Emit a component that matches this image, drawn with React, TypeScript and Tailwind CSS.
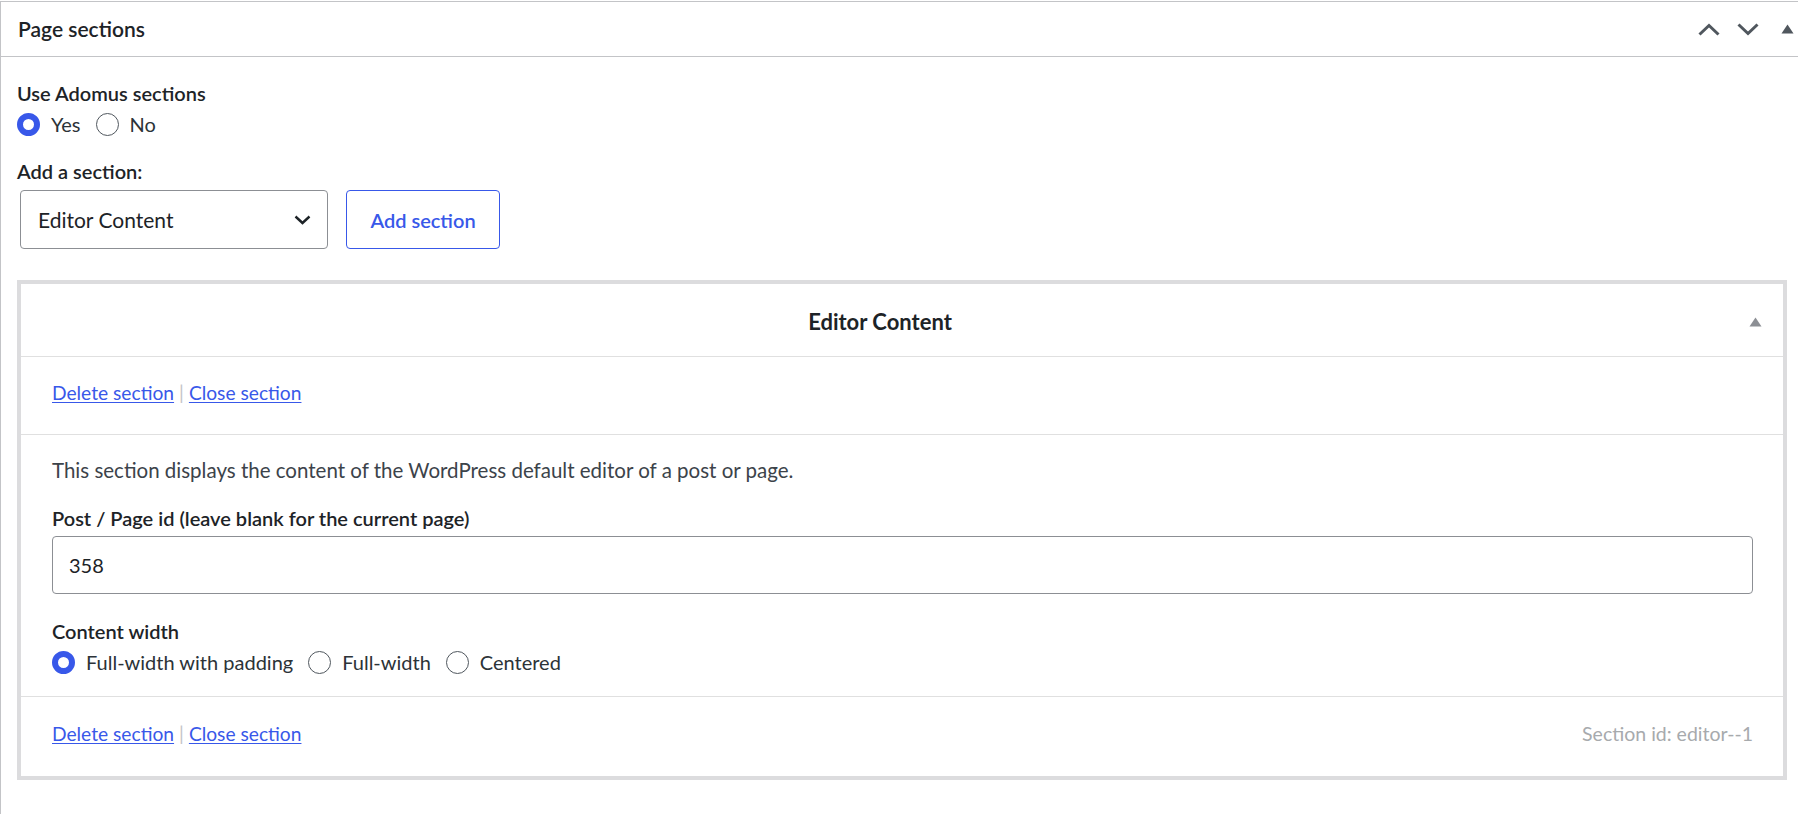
import React from "react";

const font = { fontFamily: "Lato, 'Noto Sans', sans-serif" };

function Radio({ checked, label }: { checked?: boolean; label: string }) {
  return (
    <label className="flex items-center gap-[11px] mr-[15px]">
      {checked ? (
        <span className="w-[23px] h-[23px] rounded-full border-[6px] border-[#3858e9] bg-white" />
      ) : (
        <span className="w-[23px] h-[23px] rounded-full border-[1.5px] border-[#50575e] bg-white" />
      )}
      <span>{label}</span>
    </label>
  );
}

function SectionLinks() {
  return (
    <div className="flex items-center text-[19.2px] leading-[28px]">
      <a href="#" className="text-[#3858e9] underline underline-offset-2">Delete section</a>
      <span className="mx-[5px] text-[#c3c4c7]">|</span>
      <a href="#" className="text-[#3858e9] underline underline-offset-2">Close section</a>
    </div>
  );
}

export default function App() {
  return (
    <div className="w-[1798px] h-[814px] bg-white overflow-hidden pt-px text-[#1d2327]" style={font}>
      <div className="h-full border-l border-t border-[#c3c4c7]">
        {/* Header */}
        <div className="h-[55px] flex items-center border-b border-[#c3c4c7] pl-[17px]">
          <h2 className="text-[21px] font-semibold">Page sections</h2>
          <div className="ml-auto flex items-center">
            <svg width="22" height="13" viewBox="0 0 22 13" className="mt-[1px]">
              <path d="M1.5 11.5 L11 2.5 L20.5 11.5" fill="none" stroke="#50575e" strokeWidth="3" />
            </svg>
            <svg width="22" height="13" viewBox="0 0 22 13" className="ml-[17px] mt-[1px]">
              <path d="M1.5 1.5 L11 10.5 L20.5 1.5" fill="none" stroke="#50575e" strokeWidth="3" />
            </svg>
            <svg width="13" height="10" viewBox="0 0 13 10" className="ml-[22px] mr-[4px]">
              <path d="M6.5 0.5 L12.5 9.5 L0.5 9.5 Z" fill="#50575e" />
            </svg>
          </div>
        </div>

        {/* Body */}
        <div className="pl-4">
          <div className="pt-[22px] text-[20px] leading-[28px] font-semibold">Use Adomus sections</div>
          <div className="mt-[2px] h-[30px] flex items-center text-[20px] text-[#2c3338]">
            <Radio checked label="Yes" />
            <Radio label="No" />
          </div>
          <div className="mt-[18px] text-[20px] leading-[28px] font-semibold">Add a section:</div>
          <div className="mt-[5px] flex items-center">
            <div className="ml-[3px] w-[308px] h-[59px] border border-[#8c8f94] rounded-[4px] flex items-center pl-[17px] pr-[16px] text-[21px]">
              <span>Editor Content</span>
              <svg width="17" height="10" viewBox="0 0 17 10" className="ml-auto">
                <path d="M1.5 1.5 L8.5 8 L15.5 1.5" fill="none" stroke="#1d2327" strokeWidth="2.4" />
              </svg>
            </div>
            <button className="ml-[18px] w-[154px] h-[59px] border border-[#3858e9] rounded-[4px] text-[#3858e9] text-[20px] font-semibold bg-white">
              Add section
            </button>
          </div>

          {/* Section box */}
          <div className="mt-[31px] w-[1770px] border-4 border-[#dcdcde]">
            <div className="h-[73px] flex items-center border-b border-[#e0e0e0] pt-[3px]">
              <div className="flex-1 text-center text-[22px] font-bold">Editor Content</div>
              <div className="w-[44px] pl-[10px]">
                <svg width="13" height="10" viewBox="0 0 13 10">
                  <path d="M6.5 0.5 L12.5 9.5 L0.5 9.5 Z" fill="#8c8f94" />
                </svg>
              </div>
            </div>
            <div className="h-[78px] flex items-center border-b border-[#e0e0e0] pl-[31px] pb-[6px]">
              <SectionLinks />
            </div>
            <div className="pl-[31px] pr-[30px] pt-[21px] pb-[20px] border-b border-[#e0e0e0]">
              <p className="text-[20.5px] leading-[28px] text-[#3c434a]">
                This section displays the content of the WordPress default editor of a post or page.
              </p>
              <div className="mt-[20px] text-[20px] leading-[28px] font-semibold">
                Post / Page id (leave blank for the current page)
              </div>
              <div className="mt-[4px] h-[58px] border border-[#8c8f94] rounded-[4px] flex items-center pl-[16px] text-[20px]">
                358
              </div>
              <div className="mt-[23px] text-[20px] leading-[28px] font-semibold">Content width</div>
              <div className="mt-[3px] h-[28px] flex items-center text-[20px] text-[#2c3338]">
                <Radio checked label="Full-width with padding" />
                <Radio label="Full-width" />
                <Radio label="Centered" />
              </div>
            </div>
            <div className="h-[79px] pt-[23px] flex items-start pl-[31px] pr-[30px]">
              <SectionLinks />
              <div className="ml-auto text-[19.5px] leading-[28px] text-[#a7aaad]">Section id: editor--1</div>
            </div>
          </div>
        </div>
      </div>
    </div>
  );
}
